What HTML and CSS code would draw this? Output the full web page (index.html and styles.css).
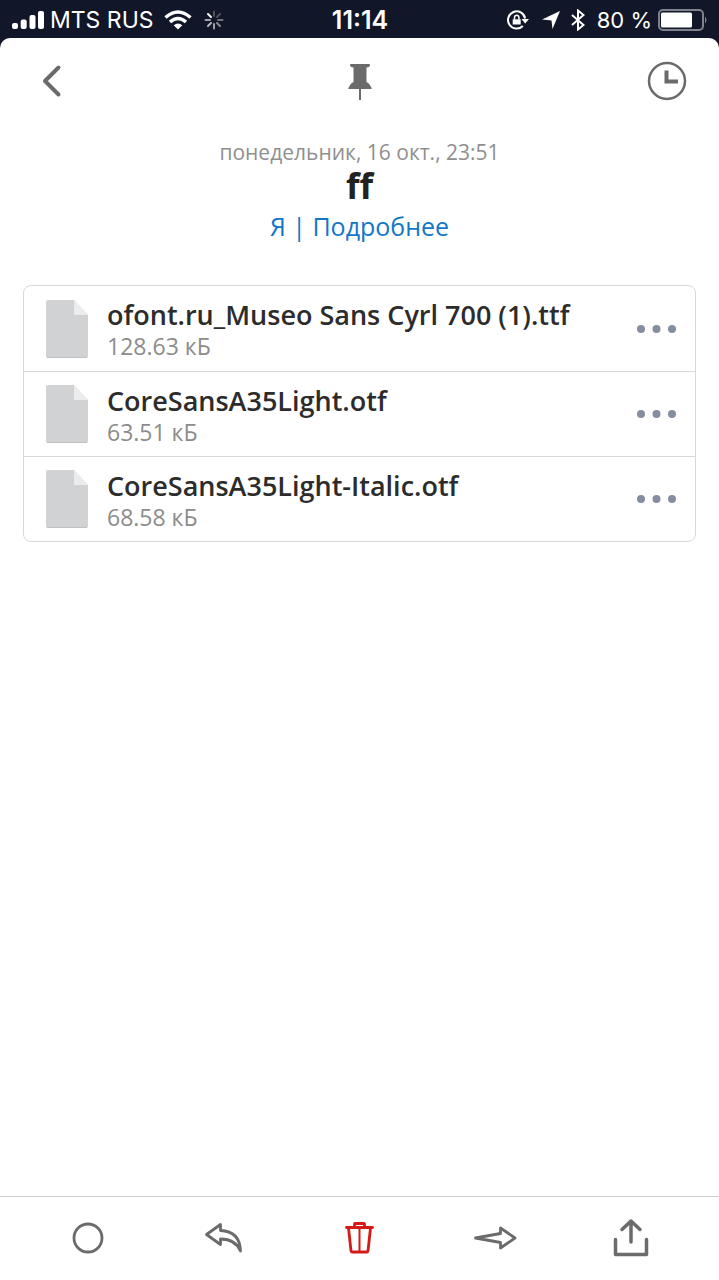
FILE: index.html
```html
<!DOCTYPE html>
<html lang="ru">
<head>
<meta charset="utf-8">
<meta name="viewport" content="width=device-width, initial-scale=1">
<title>ff</title>
<link rel="stylesheet" href="styles.css">
</head>
<body>
<div class="status">
  <div class="status-left">
    <svg width="32" height="20" viewBox="0 0 32 20" fill="#fff"><rect x="0" y="13" width="6" height="6" rx="2"/><rect x="8.700" y="9.500" width="6" height="9.500" rx="2"/><rect x="17.500" y="5" width="6" height="14" rx="2"/><rect x="26" y="1" width="6" height="18" rx="2"/></svg>
    <span class="carrier">MTS RUS</span>
    <svg class="wifi" width="28" height="20" viewBox="0 0 28 20" fill="none" stroke="#fff" stroke-width="3.500"><path d="M1.500 7.500Q14-3.500 26.500 7.500M6 12Q14 5 22 12"/><path d="M14 19.500L9.700 15.200Q14 11.800 18.300 15.200Z" fill="#fff" stroke="none"/></svg>
    <svg width="20" height="20" viewBox="0 0 20 20" stroke="#fff" stroke-width="2" stroke-linecap="round"><path d="M10 1.500V6" opacity=".25"/><path d="M16 4L13 7" opacity=".25"/><path d="M18.500 10H14" opacity=".4"/><path d="M16 16L13 13" opacity=".5"/><path d="M10 18.500V14" opacity=".6"/><path d="M4 16L7 13" opacity=".7"/><path d="M1.500 10H6" opacity=".6"/><path d="M4 4L7 7" opacity=".95"/></svg>
  </div>
  <time class="clock">11:14</time>
  <div class="status-right">
    <svg width="22" height="20" viewBox="0 0 22 20" fill="none" stroke="#fff" stroke-width="2"><path d="M15.800 16A8.600 8.600 0 1 1 18.100 8.500"/><path d="M14.500 9H22L18.200 13.500Z" fill="#fff" stroke="none"/><path d="M5.700 9.300H13.700V14.500H5.700Z" fill="#fff" stroke="none"/><path d="M7.500 9.500V7.500A2.200 2.300 0 0 1 11.900 7.500V9.500" stroke-width="1.500"/></svg>
    <svg class="arrow" width="20" height="20" viewBox="0 0 20 20" fill="#fff"><path d="M19 1L11.500 19L10.500 10.500L1 9.500Z"/></svg>
    <svg class="bt" width="14" height="22" viewBox="0 0 14 22" fill="none" stroke="#fff" stroke-width="2"><path d="M1 6L12.500 16L7 20.500V1.500L12.500 6L1 16"/></svg>
    <span class="charge">80 %</span>
    <svg width="50" height="22" viewBox="0 0 50 22"><rect x="1" y="1" width="44" height="20" rx="4" fill="none" stroke="#80838e" stroke-width="2"/><rect x="3" y="3.500" width="31" height="15" rx="1.500" fill="#fff"/><path d="M47 7.500Q50 11 47 14.500Z" fill="#80838e"/></svg>
  </div>
</div>
<div class="sheet">
  <header class="nav">
    <button class="icon-btn start" aria-label="Назад"><svg width="20" height="34" viewBox="0 0 20 34" fill="none" stroke="#6b6b6b" stroke-width="4" stroke-linecap="round" stroke-linejoin="round"><path d="M16.500 3.500L3 17L16.500 30.500"/></svg></button>
    <button class="icon-btn" aria-label="Закрепить"><svg width="24" height="38" viewBox="0 0 24 38" fill="#6b6b6b"><path d="M3 2H21Q22 2 22 3Q22 5 18.500 5.500V20Q22 21.500 23.800 27H.2Q2 21.500 5.500 20V5.500Q2 5 2 3Q2 2 3 2Z"/><path d="M11 26H13V38H11Z"/></svg></button>
    <button class="icon-btn end" aria-label="Отложить"><svg width="40" height="40" viewBox="0 0 40 40" fill="none" stroke="#6b6b6b"><circle cx="20" cy="20" r="18" stroke-width="2.500"/><path d="M19.500 9.500V20.500H31" stroke-width="4"/></svg></button>
  </header>
  <main class="main">
    <div class="head">
      <time class="date">понедельник, 16 окт., 23:51</time>
      <h1 class="title">ff</h1>
      <a class="people" href="#">Я | Подробнее</a>
    </div>
    <ul class="files">
      <li class="file">
        <svg class="doc" width="42" height="58" viewBox="0 0 42 58"><path d="M2 0H28L42 15V56Q42 58 40 58H2Q0 58 0 56V2Q0 0 2 0Z" fill="#d0d2d4"/><path d="M28 0L42 15H28Z" fill="#ececec"/><path d="M1 57.500H41" stroke="#bec0c2"/></svg>
        <div class="info"><span class="name">ofont.ru_Museo Sans Cyrl 700 (1).ttf</span><span class="size">128.63 кБ</span></div>
        <button class="more" aria-label="Ещё"><svg width="40" height="10" viewBox="0 0 40 10" fill="#858da0"><circle cx="4" cy="5" r="4"/><circle cx="19.500" cy="5" r="4"/><circle cx="35" cy="5" r="4"/></svg></button>
      </li>
      <li class="file">
        <svg class="doc" width="42" height="58" viewBox="0 0 42 58"><path d="M2 0H28L42 15V56Q42 58 40 58H2Q0 58 0 56V2Q0 0 2 0Z" fill="#d0d2d4"/><path d="M28 0L42 15H28Z" fill="#ececec"/><path d="M1 57.500H41" stroke="#bec0c2"/></svg>
        <div class="info"><span class="name">CoreSansA35Light.otf</span><span class="size">63.51 кБ</span></div>
        <button class="more" aria-label="Ещё"><svg width="40" height="10" viewBox="0 0 40 10" fill="#858da0"><circle cx="4" cy="5" r="4"/><circle cx="19.500" cy="5" r="4"/><circle cx="35" cy="5" r="4"/></svg></button>
      </li>
      <li class="file">
        <svg class="doc" width="42" height="58" viewBox="0 0 42 58"><path d="M2 0H28L42 15V56Q42 58 40 58H2Q0 58 0 56V2Q0 0 2 0Z" fill="#d0d2d4"/><path d="M28 0L42 15H28Z" fill="#ececec"/><path d="M1 57.500H41" stroke="#bec0c2"/></svg>
        <div class="info"><span class="name">CoreSansA35Light-Italic.otf</span><span class="size">68.58 кБ</span></div>
        <button class="more" aria-label="Ещё"><svg width="40" height="10" viewBox="0 0 40 10" fill="#858da0"><circle cx="4" cy="5" r="4"/><circle cx="19.500" cy="5" r="4"/><circle cx="35" cy="5" r="4"/></svg></button>
      </li>
    </ul>
  </main>
  <footer class="toolbar">
    <button class="tool" aria-label="Отметить"><svg width="44" height="44" viewBox="0 0 44 44" fill="none" stroke="#6b6b6b" stroke-width="2.800"><circle cx="22" cy="22" r="14"/></svg></button>
    <button class="tool" aria-label="Ответить"><svg width="44" height="44" viewBox="0 0 44 44" fill="none" stroke="#6b6b6b" stroke-width="2.800" stroke-linejoin="round" stroke-linecap="round"><path d="M4.500 18.500L18.500 8.500V14.500C31 15 38 21 38.500 35C35 27 29 23 18.500 23V28.500Z"/></svg></button>
    <button class="tool" aria-label="Удалить"><svg width="44" height="44" viewBox="0 0 44 44" fill="none" stroke="#d51a1a" stroke-width="2.800" stroke-linejoin="round" stroke-linecap="round"><path d="M9.500 11.500H35.500M17.500 11V8Q17.500 7.500 18 7.500H27Q27.500 7.500 27.500 8V11M11.500 12L14 35Q14.200 36 15 36H30Q30.800 36 31 35L33.500 12"/><path d="M22.500 12V36" stroke-width="2"/></svg></button>
    <button class="tool" aria-label="Переслать"><svg width="44" height="44" viewBox="0 0 44 44" fill="none" stroke="#6b6b6b" stroke-width="2.800" stroke-linejoin="round"><path d="M2.500 22L27.500 17.500V12L42 22L27.500 32V26.500Z"/></svg></button>
    <button class="tool" aria-label="Поделиться"><svg width="44" height="44" viewBox="0 0 44 44" fill="none" stroke="#6b6b6b" stroke-width="3.500" stroke-linejoin="round" stroke-linecap="round"><path d="M22 26V5M13 13.500L22 5L31 13.500M6.500 23.500V38.500H37.500V23.500"/></svg></button>
  </footer>
</div>
</body>
</html>
```
FILE: styles.css
```css
* {
  box-sizing: border-box;
}

body {
  margin: 0;
  min-height: 100vh;
  display: flex;
  flex-direction: column;
  background: #111628;
  font-family: "Open Sans", "Noto Sans", sans-serif;
}

svg {
  display: block;
  flex: none;
}

button {
  display: flex;
  padding: 0;
  border: 0;
  background: none;
  cursor: pointer;
}

.status {
  display: grid;
  grid-template-columns: 1fr auto 1fr;
  align-items: center;
  padding: 2px 11px 0 12px;
  color: #fff;
  font-family: Inter, "Liberation Sans", sans-serif;
  font-size: 23px;
  line-height: 36px;
}

.status-left,
.status-right {
  display: flex;
  align-items: center;
  gap: 6px;
}

.status-right {
  justify-content: flex-end;
}

.wifi {
  margin: 0 6px 0 4px;
}

.arrow {
  margin: 0 4px 0 6px;
}

.bt {
  margin-right: 6px;
}

.charge {
  font-size: 22px;
}

.clock {
  font-size: 25px;
  font-weight: 600;
}

.sheet {
  flex: 1;
  display: flex;
  flex-direction: column;
  background: #fff;
  border-radius: 10px 10px 0 0;
}

.nav {
  display: grid;
  grid-template-columns: 1fr auto 1fr;
  align-items: center;
  padding: 23px 32px 0;
}

.icon-btn {
  justify-self: center;
}

.start {
  justify-self: start;
  padding-left: 10px;
}

.end {
  justify-self: end;
}

.main {
  flex: 1;
  padding: 36px 23px;
}

.head {
  display: flex;
  flex-direction: column;
  align-items: center;
}

.date {
  color: #8f8f8f;
  font-size: 21px;
  line-height: 30px;
}

.title {
  margin: 0;
  color: #222;
  font-size: 35px;
  line-height: 38px;
}

.people {
  color: #1277c8;
  font-size: 25px;
  line-height: 42px;
  text-decoration: none;
}

.files {
  margin: 38px 0 0;
  padding: 0;
  list-style: none;
  border: 1px solid #d8d8d8;
  border-radius: 8px;
}

.file {
  display: flex;
  align-items: center;
  height: 85px;
  padding: 0 18px 0 22px;
}

.file + .file {
  border-top: 1px solid #d8d8d8;
}

.info {
  flex: 1;
  display: flex;
  flex-direction: column;
  min-width: 0;
  padding: 3px 0 0 19px;
}

.name {
  color: #2c2c2c;
  font-size: 27px;
  font-weight: 600;
  line-height: 32px;
}

.size {
  color: #8c8c8c;
  font-size: 23px;
  line-height: 30px;
}

.toolbar {
  display: flex;
  padding: 19px 20px 20px;
  border-top: 1px solid #cfcfcf;
}

.tool {
  flex: 1;
  justify-content: center;
}
```
